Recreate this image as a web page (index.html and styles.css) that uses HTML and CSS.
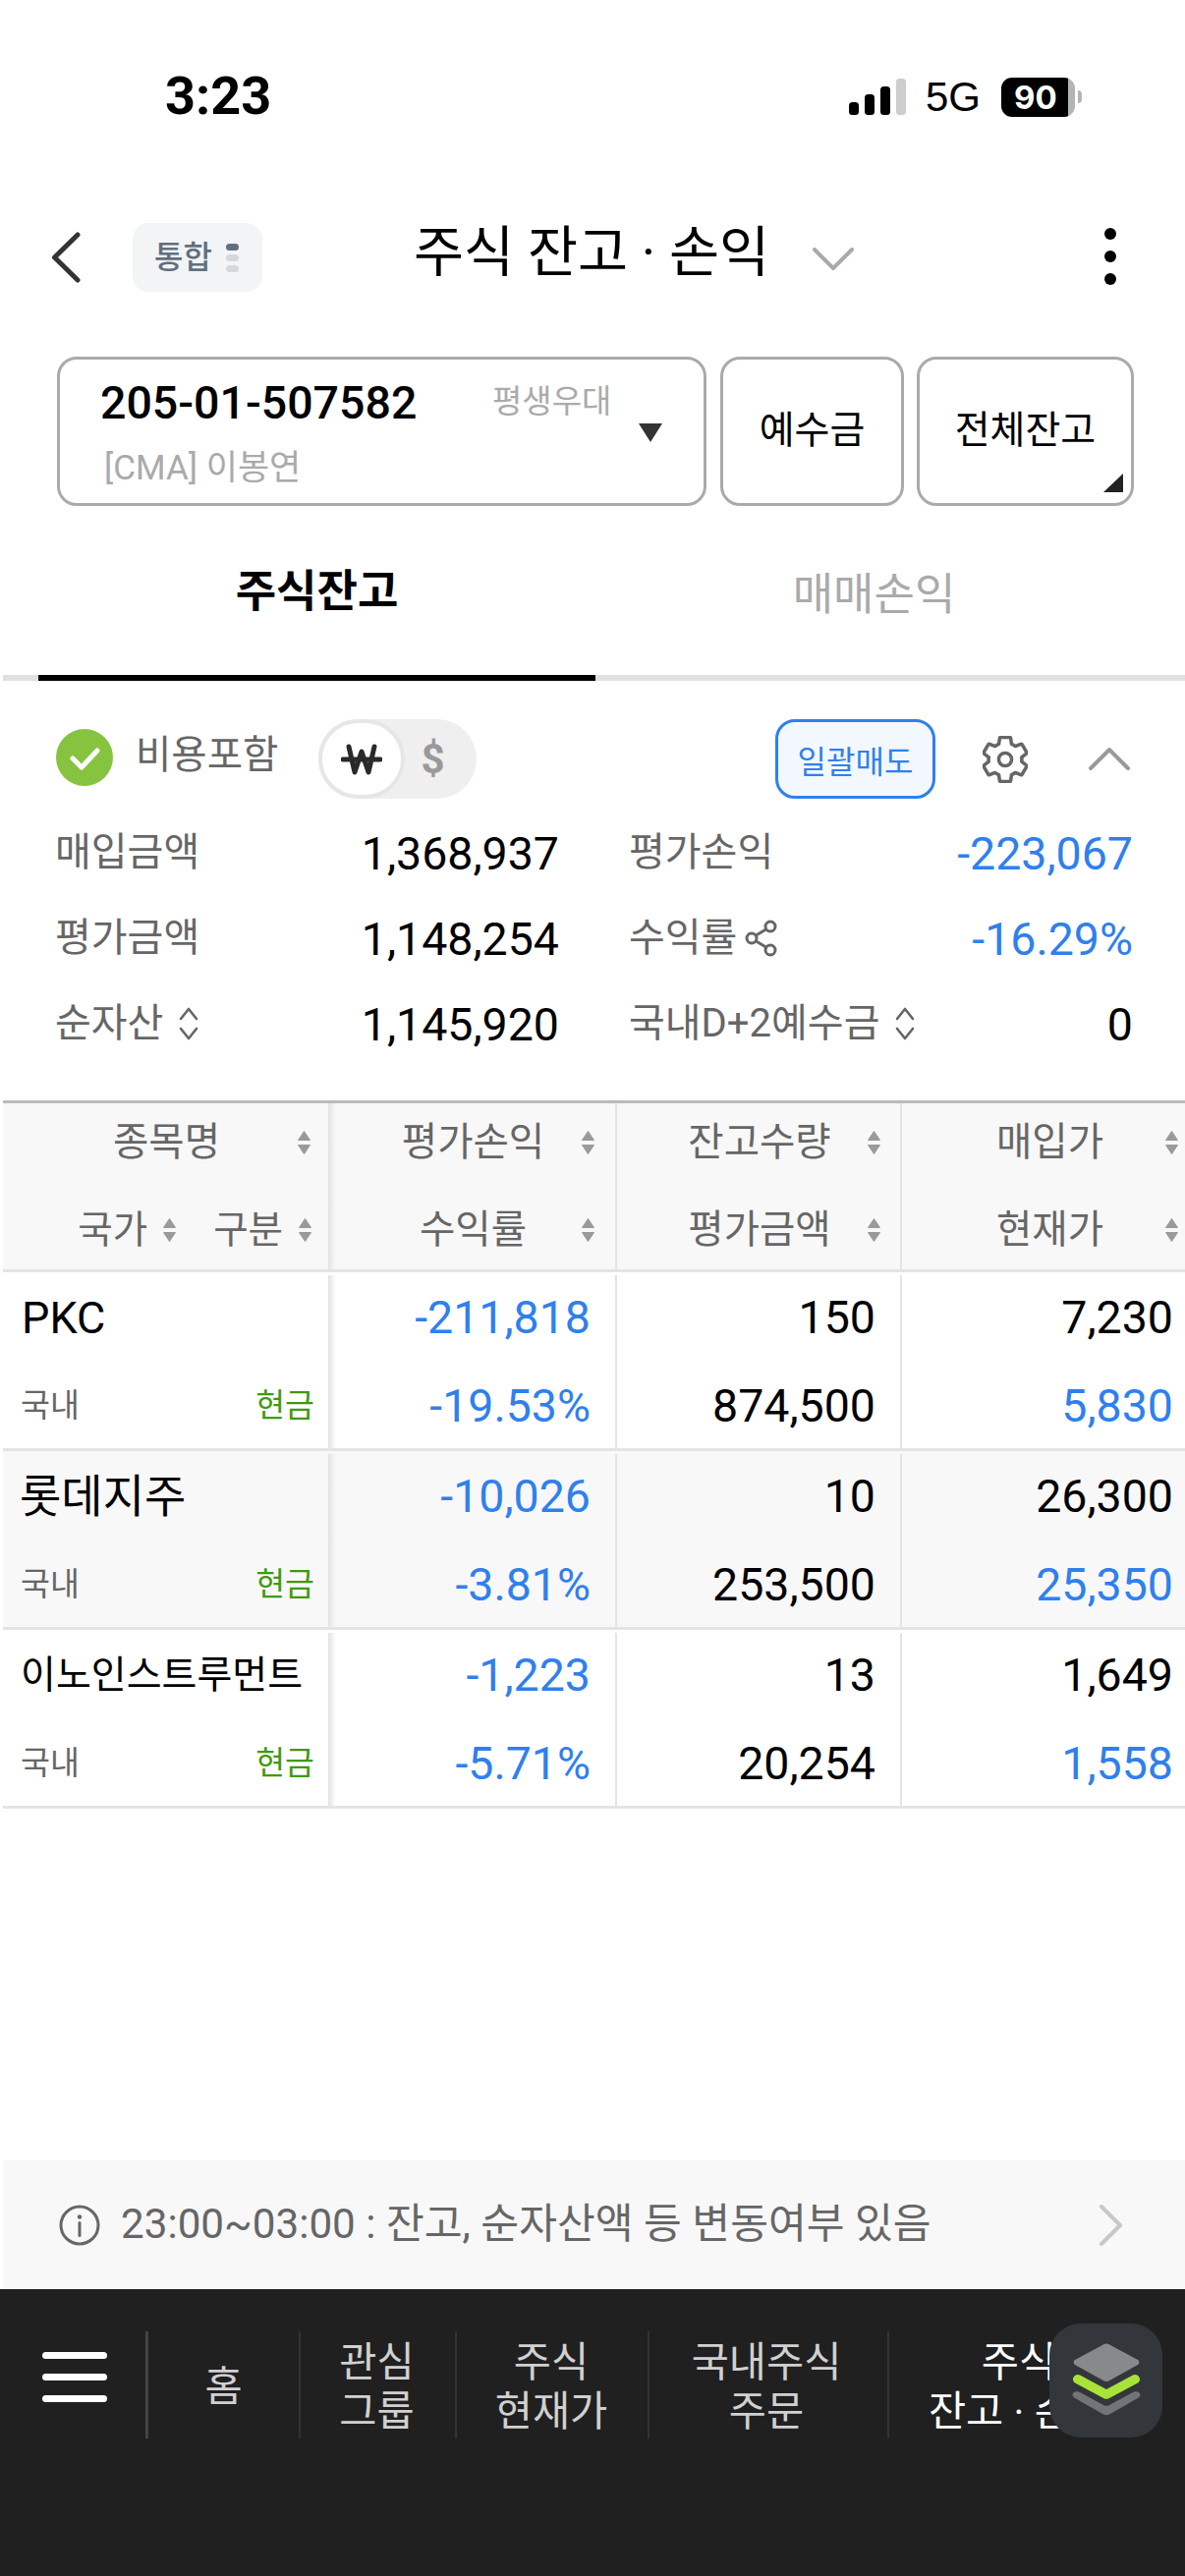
FILE: index.html
```html
<!DOCTYPE html>
<html lang="ko">
<head>
<meta charset="utf-8">
<title>주식 잔고 · 손익</title>
<link rel="stylesheet" href="styles.css">
</head>
<body>
<svg class="defs" width="0" height="0" aria-hidden="true">
  <symbol id="sort" viewBox="0 0 14 26"><path d="M7 1.500 13 10.500H1zM7 24.500 1 15.500h12z" fill="#9a9a9a" stroke="#9a9a9a" stroke-linejoin="round"/></symbol>
  <symbol id="updown" viewBox="0 0 20 34"><path d="M2 12 10 2l8 10M2 22l8 10 8-10" fill="none" stroke="#666" stroke-width="2.600" stroke-linecap="round" stroke-linejoin="round"/></symbol>
</svg>
<div class="page">
  <div class="status">
    <span class="time">3:23</span>
    <div class="status-right">
      <svg class="signal" width="58" height="37" viewBox="0 0 58 37"><rect x="0" y="24" width="10" height="13" rx="3.500"/><rect x="16" y="16" width="10" height="21" rx="3.500"/><rect x="32" y="8" width="10" height="29" rx="3.500"/><rect x="48" y="0" width="10" height="37" rx="3.500" fill="#cdcdcd"/></svg>
      <span class="net">5G</span>
      <div class="battery"><span class="battery-fill">90</span><span class="battery-nub"></span></div>
    </div>
  </div>

  <header class="topbar">
    <svg class="back" width="30" height="52" viewBox="0 0 30 52"><path d="M27 3 3.500 26 27 49" fill="none" stroke="#333" stroke-width="5" stroke-linecap="round" stroke-linejoin="round"/></svg>
    <div class="pill"><span class="pill-text">통합</span><span class="pill-dots"><i class="on"></i><i></i><i></i></span></div>
    <h1 class="title">주식 잔고 · 손익</h1>
    <svg class="title-caret" width="42" height="24" viewBox="0 0 42 24"><path d="M2 2 21 21 40 2" fill="none" stroke="#aaa" stroke-width="4" stroke-linecap="round" stroke-linejoin="round"/></svg>
    <div class="kebab"><i></i><i></i><i></i></div>
  </header>

  <section class="account-row">
    <div class="account box">
      <div class="acc-top"><span class="acc-no">205-01-507582</span><span class="acc-tag">평생우대</span></div>
      <div class="acc-sub">[CMA] 이봉연</div>
      <span class="acc-arrow"></span>
    </div>
    <div class="btn box btn-a">예수금</div>
    <div class="btn box btn-b">전체잔고<span class="corner"></span></div>
  </section>

  <nav class="tabs">
    <div class="tab active">주식잔고</div>
    <div class="tab">매매손익</div>
  </nav>

  <section class="summary">
    <div class="controls">
      <svg class="check" width="58" height="58" viewBox="0 0 58 58"><circle cx="29" cy="29" r="29" fill="#86c440"/><path d="M17 30l9 9 16-17" fill="none" stroke="#fff" stroke-width="5" stroke-linecap="round" stroke-linejoin="round"/></svg>
      <span class="cost">비용포함</span>
      <div class="toggle">
        <span class="knob">
          <svg width="42" height="32" viewBox="0 0 42 32"><path d="M8 3l6 26L21 8l7 21 6-26M2 16h38" fill="none" stroke="#2a2a2a" stroke-width="5" stroke-linecap="round" stroke-linejoin="round"/></svg>
        </span>
        <span class="dollar">$</span>
      </div>
      <div class="sell">일괄매도</div>
      <svg class="gear" width="46" height="48" viewBox="2.200 2 19.600 20"><path d="M19.140 12.940c.04-.3.06-.61.06-.94 0-.32-.02-.64-.07-.94l2.030-1.580c.18-.14.23-.41.12-.61l-1.920-3.320c-.12-.22-.37-.29-.59-.22l-2.390.96c-.5-.38-1.030-.7-1.620-.94L14.400 2.810c-.04-.24-.24-.41-.48-.41h-3.840c-.24 0-.43.17-.47.41L9.250 5.350c-.59.24-1.130.57-1.620.94L5.240 5.330c-.22-.08-.47 0-.59.22L2.740 8.870c-.12.21-.08.47.12.61l2.030 1.580C4.840 11.360 4.800 11.690 4.800 12s.02.64.07.94l-2.030 1.580c-.18.14-.23.41-.12.61l1.920 3.320c.12.22.37.29.59.22l2.390-.96c.5.38 1.030.7 1.620.94l.36 2.540c.05.24.24.41.48.41h3.840c.24 0 .44-.17.47-.41l.36-2.540c.59-.24 1.130-.56 1.620-.94l2.390.96c.22.08.47 0 .59-.22l1.920-3.320c.12-.22.07-.47-.12-.61z" fill="none" stroke="#666" stroke-width="1.500" stroke-linejoin="round"/><circle cx="12" cy="12" r="2.800" fill="none" stroke="#666" stroke-width="1.500"/></svg>
      <svg class="collapse" width="42" height="24" viewBox="0 0 42 24"><path d="M2 22 21 3l19 19" fill="none" stroke="#999" stroke-width="4" stroke-linecap="round" stroke-linejoin="round"/></svg>
    </div>
    <div class="figures">
      <div class="fig"><span class="lbl">매입금액</span><span class="val">1,368,937</span></div>
      <div class="fig"><span class="lbl">평가손익</span><span class="val blue">-223,067</span></div>
      <div class="fig"><span class="lbl">평가금액</span><span class="val">1,148,254</span></div>
      <div class="fig"><span class="lbl">수익률<svg class="share" width="34" height="38" viewBox="0 0 34 38"><g fill="none" stroke="#666" stroke-width="3"><circle cx="7" cy="19" r="5"/><circle cx="26" cy="7" r="5"/><circle cx="26" cy="31" r="5"/><path d="M11.500 16 21.500 10M11.500 22l10 6"/></g></svg></span><span class="val blue">-16.29%</span></div>
      <div class="fig"><span class="lbl">순자산<svg class="updown"><use href="#updown"/></svg></span><span class="val">1,145,920</span></div>
      <div class="fig"><span class="lbl">국내D+2예수금<svg class="updown"><use href="#updown"/></svg></span><span class="val">0</span></div>
    </div>
  </section>

  <section class="table">
    <div class="row head">
      <div class="cell c1">
        <div class="th"><span></span><span>종목명</span><svg class="sort"><use href="#sort"/></svg></div>
        <div class="th-split"><span>국가</span><svg class="sort"><use href="#sort"/></svg><span class="th-gap">구분</span><svg class="sort"><use href="#sort"/></svg></div>
      </div>
      <div class="cell c2">
        <div class="th"><span></span><span>평가손익</span><svg class="sort"><use href="#sort"/></svg></div>
        <div class="th"><span></span><span>수익률</span><svg class="sort"><use href="#sort"/></svg></div>
      </div>
      <div class="cell c3">
        <div class="th"><span></span><span>잔고수량</span><svg class="sort"><use href="#sort"/></svg></div>
        <div class="th"><span></span><span>평가금액</span><svg class="sort"><use href="#sort"/></svg></div>
      </div>
      <div class="cell c4">
        <div class="th"><span></span><span>매입가</span><svg class="sort"><use href="#sort"/></svg></div>
        <div class="th"><span></span><span>현재가</span><svg class="sort"><use href="#sort"/></svg></div>
      </div>
    </div>

    <div class="row">
      <div class="cell c1"><div class="name n-en">PKC</div><div class="meta"><span>국내</span><span class="cash">현금</span></div></div>
      <div class="cell c2 num blue"><div>-211,818</div><div>-19.53%</div></div>
      <div class="cell c3 num"><div>150</div><div>874,500</div></div>
      <div class="cell c4 num"><div>7,230</div><div class="blue">5,830</div></div>
    </div>
    <div class="row alt">
      <div class="cell c1"><div class="name n-big">롯데지주</div><div class="meta"><span>국내</span><span class="cash">현금</span></div></div>
      <div class="cell c2 num blue"><div>-10,026</div><div>-3.81%</div></div>
      <div class="cell c3 num"><div>10</div><div>253,500</div></div>
      <div class="cell c4 num"><div>26,300</div><div class="blue">25,350</div></div>
    </div>
    <div class="row">
      <div class="cell c1"><div class="name n-small">이노인스트루먼트</div><div class="meta"><span>국내</span><span class="cash">현금</span></div></div>
      <div class="cell c2 num blue"><div>-1,223</div><div>-5.71%</div></div>
      <div class="cell c3 num"><div>13</div><div>20,254</div></div>
      <div class="cell c4 num"><div>1,649</div><div class="blue">1,558</div></div>
    </div>
  </section>

  <div class="notice">
    <svg class="info" width="42" height="42" viewBox="0 0 42 42"><circle cx="21" cy="21" r="19" fill="none" stroke="#666" stroke-width="3"/><circle cx="21" cy="12.500" r="2.200" fill="#666"/><path d="M21 18.500v13" stroke="#666" stroke-width="3" stroke-linecap="round"/></svg>
    <span class="notice-text">23:00~03:00 : 잔고, 순자산액 등 변동여부 있음</span>
    <svg class="notice-go" width="26" height="42" viewBox="0 0 26 42"><path d="M3 2l19 19L3 40" fill="none" stroke="#c8c8c8" stroke-width="4" stroke-linecap="round" stroke-linejoin="round"/></svg>
  </div>

  <footer class="dock">
    <div class="burger"><i></i><i></i><i></i></div>
    <div class="dock-item d1">홈</div>
    <div class="dock-item d2">관심<br>그룹</div>
    <div class="dock-item d3">주식<br>현재가</div>
    <div class="dock-item d4">국내주식<br>주문</div>
    <div class="dock-item d5">주식<br>잔고 · 손익</div>
    <div class="float">
      <svg width="72" height="76" viewBox="0 0 72 76">
        <path d="M31 2.500a8 8 0 0 1 10 0L68 17a3 3 0 0 1 0 5L41 37a8 8 0 0 1-10 0L4 22a3 3 0 0 1 0-5z" fill="#88898b"/>
        <path d="M2 36a5 5 0 0 1 7-3.500L36 47l27-14.500a5 5 0 0 1 7 3.500 5 5 0 0 1-3 5L39 56a6 6 0 0 1-6 0L5 41a5 5 0 0 1-3-5z" fill="#a9e33a"/>
        <path d="M9 50 33 63a6 6 0 0 0 6 0l24-13c4-2 9 1 7 4-.5 1-2 2-3 2.500L40 72a8 8 0 0 1-8 0L5 56.500c-1-.5-2.500-1.500-3-2.500-2-3 3-6 7-4z" fill="#737477"/>
      </svg>
    </div>
  </footer>
</div>
</body>
</html>
```

FILE: styles.css
```css
* { box-sizing: border-box; }
html, body { margin: 0; padding: 0; background: #fff; }
body { font-family: Roboto, "Noto Sans CJK KR", sans-serif; color: #000; }
.defs { position: absolute; }
.page { width: 1206px; height: 2622px; overflow: hidden; display: flex; flex-direction: column; }

/* status bar */
.status { height: 192px; display: flex; align-items: center; justify-content: space-between; padding: 3px 105px 0 168px; flex: none; }
.time { font-size: 54px; font-weight: 700; line-height: 1; }
.status-right { display: flex; align-items: center; margin-top: 2px; }
.net { font-family: "Liberation Sans", sans-serif; font-size: 42px; line-height: 1; margin-left: 20px; }
.battery { display: flex; align-items: center; margin-left: 21px; }
.battery-fill { width: 75px; height: 40px; border-radius: 11px; background: linear-gradient(90deg, #000 0, #000 68px, #b4b4b4 68px); color: #fff; font-family: Inter, sans-serif; font-weight: 700; font-size: 33px; line-height: 40px; text-align: left; padding-left: 13px; }
.battery-nub { width: 4px; height: 13px; background: #b4b4b4; margin-left: 3px; border-radius: 0 4px 4px 0; }

/* header */
.topbar { height: 130px; flex: none; display: flex; align-items: center; padding: 10px 0 0 52px; }
.back { flex: none; }
.pill { width: 132px; height: 70px; border-radius: 16px; background: #f3f4f5; margin-left: 53px; display: flex; align-items: center; padding-left: 22px; gap: 14px; flex: none; }
.pill-text { font-size: 32px; font-weight: 500; color: #5f7080; line-height: 1; }
.pill-dots { display: flex; flex-direction: column; gap: 4px; }
.pill-dots i { display: block; width: 13px; height: 7px; border-radius: 4px; background: #d5d8db; }
.pill-dots i.on { background: #5f7080; }
.title { margin: -8px 0 0 154px; font-size: 55.500px; font-weight: 400; line-height: 1; white-space: nowrap; flex: none; }
.title-caret { margin-left: 44px; margin-top: 4px; flex: none; }
.kebab { margin-left: auto; margin-right: 70px; margin-top: -2px; display: flex; flex-direction: column; gap: 11px; }
.kebab i { display: block; width: 12px; height: 12px; border-radius: 50%; background: #000; }

/* account row */
.account-row { flex: none; display: flex; padding: 41px 52px 0 58px; height: 193px; }
.box { border: 3px solid #aaa; border-radius: 20px; height: 152px; }
.account { position: relative; width: 661px; padding: 18px 0 0 41px; }
.acc-top { display: flex; align-items: center; height: 52px; }
.acc-no { font-size: 46.500px; font-weight: 500; width: 399px; line-height: 1; }
.acc-tag { font-size: 33px; color: #aaa; line-height: 1; margin-top: -4px; }
.acc-sub { font-size: 35px; color: #aaa; margin: 23px 0 0 4px; line-height: 1; }
.acc-arrow { position: absolute; left: 589px; top: 65px; width: 0; height: 0; border-left: 12px solid transparent; border-right: 12px solid transparent; border-top: 19px solid #333; }
.btn { display: flex; align-items: center; justify-content: center; font-size: 39px; line-height: 1; position: relative; padding-bottom: 2px; }
.btn-a { width: 187px; margin-left: 14px; }
.btn-b { width: 221px; margin-left: 13px; }
.corner { position: absolute; right: 8px; bottom: 11px; width: 0; height: 0; border-left: 20px solid transparent; border-bottom: 19px solid #222; }

/* tabs */
.tabs { flex: none; height: 178px; margin-left: 3px; padding-left: 36px; display: flex; border-bottom: 6px solid #e0e0e0; }
.tab { width: 567px; height: 178px; display: flex; align-items: center; justify-content: center; font-size: 45px; color: #aaa; padding-bottom: 5px; }
.tab.active { color: #000; font-weight: 700; border-bottom: 6px solid #000; }

/* summary */
.summary { flex: none; height: 427px; padding: 39px 52px 0 57px; }
.controls { display: flex; align-items: center; height: 81px; }
.check { flex: none; margin-top: -4px; }
.cost { font-size: 39.500px; color: #666; margin-left: 23px; line-height: 1; margin-top: -8px; }
.toggle { margin-left: 41px; width: 161px; height: 81px; border-radius: 41px; background: #efefef; display: flex; align-items: center; }
.knob { width: 88px; height: 81px; border-radius: 41px; background: #fff; border: 4px solid #e6e6e6; display: flex; align-items: center; justify-content: center; flex: none; }
.dollar { font-size: 42px; font-weight: 700; color: #999; margin-left: 16px; line-height: 1; }
.sell { margin-left: auto; width: 163px; height: 81px; border: 3px solid #2f80ed; border-radius: 20px; background: #f3f8ff; color: #2f80ed; font-size: 32px; display: flex; align-items: center; justify-content: center; }
.gear { margin-left: 48px; flex: none; }
.collapse { margin: -2px 4px 0 62px; flex: none; }
.figures { display: grid; grid-template-columns: 513px 513px; column-gap: 71px; margin: 13px 0 0 -1px; }
.fig { display: flex; align-items: center; justify-content: space-between; height: 87px; }
.lbl { font-size: 40px; color: #666; line-height: 1; display: flex; align-items: center; margin-top: -4px; }
.val { font-size: 46.500px; line-height: 1; }
.blue { color: #2f80ed; }
.share { margin-left: 8px; }
.updown { width: 20px; height: 34px; margin-left: 16px; }

/* table */
.table { flex: none; margin-left: 3px; border-top: 3px solid #bbb; }
.row { display: grid; grid-template-columns: 331px 294px 290px 288px; height: 182px; padding-top: 3px; border-bottom: 3px solid #e4e4e4; }
.row.alt { background: #f8f8f8; }
.row.head { height: 172px; padding-top: 0; background: #f8f8f8; }
.cell { display: flex; flex-direction: column; border-right: 2px solid #e4e4e4; }
.cell > div { flex: 1; display: flex; align-items: center; }
.cell > div:last-child { padding-top: 3px; }
.c1 { padding: 0 15px 0 20px; border-right: 0; }
.c2 { background-image: linear-gradient(90deg, #e2e2e2, rgba(226,226,226,0) 8px); }
.c4 { border-right: 0; }
.num { font-size: 46.500px; line-height: 1; padding-right: 25px; }
.num > div { justify-content: flex-end; }
.c4.num { padding-right: 12px; }
.head .cell > div { color: #666; font-size: 39.500px; line-height: 1; }
.head .cell > div:first-child { padding-bottom: 6px; }
.th { display: grid !important; grid-template-columns: 1fr auto 1fr; align-items: center; }
.th .sort { justify-self: end; margin-right: 20px; }
.c1 .th { margin: 0 -15px 0 -20px; padding-left: 2px; }
.c1 .th .sort { margin-right: 17px; }
.c2 .th { padding-left: 3px; }
.c3 .th { padding-left: 2px; }
.c3 .th .sort { margin-right: 19px; }
.c4 .th { padding-left: 13px; }
.c4 .th .sort { margin-right: 6px; }
.th-split { justify-content: flex-end; margin-right: 1px; }
.th-split span { font-size: 38.500px; }
.th-split .sort { margin-left: 15px; }
.th-gap { margin-left: 37px; }
.sort { width: 15px; height: 26px; flex: none; }
.name { color: #000; line-height: 1; }
.n-en { font-size: 45px; margin-left: -1px; }
.n-big { font-size: 46px; margin-left: -3px; }
.n-small { font-size: 39px; white-space: nowrap; margin-left: -2px; }
.meta { justify-content: space-between; font-size: 32.500px; color: #666; line-height: 1; margin: 0 -1px 0 -2px; }
.cash { color: #3f9a0f; }

/* notice */
.notice { flex: none; margin: auto 0 0 3px; height: 131px; background: #f8f8f8; display: flex; align-items: center; padding-left: 57px; }
.info { flex: none; }
.notice-text { margin-left: 21px; font-size: 42.200px; color: #666; line-height: 1; white-space: nowrap; }
.notice-go { margin-left: auto; margin-right: 62px; flex: none; }

/* dock */
.dock { flex: none; height: 292px; background: #202020; position: relative; display: flex; align-items: flex-start; padding-top: 43px; color: #d0d0d0; overflow: hidden; }
.burger { width: 151px; height: 109px; padding: 21px 0 0 43px; border-right: 3px solid #444; display: flex; flex-direction: column; gap: 15px; flex: none; }
.burger i { display: block; width: 66px; height: 7px; border-radius: 4px; background: #fff; }
.dock-item { height: 109px; padding-top: 5px; display: flex; align-items: center; justify-content: center; text-align: center; font-size: 41.500px; line-height: 50px; border-right: 2px solid #333; flex: none; white-space: nowrap; }
.d1 { width: 155px; }
.d2 { width: 159px; padding-right: 2px; }
.d3 { width: 196px; padding-right: 2px; }
.d4 { width: 244px; padding-right: 4px; }
.d5 { width: 264px; border-right: 0; color: #fff; }
.float { position: absolute; left: 1068px; top: 35px; width: 115px; height: 116px; border-radius: 32px; background: #33363a; display: flex; align-items: center; justify-content: center; }
```
